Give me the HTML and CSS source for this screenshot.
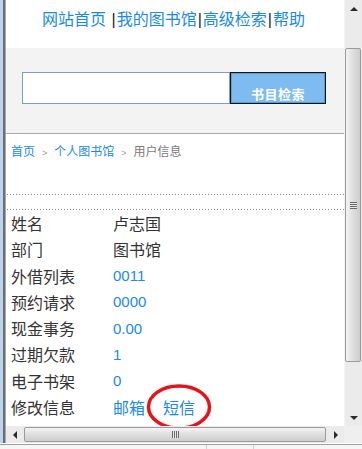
FILE: index.html
```html
<!DOCTYPE html>
<html lang="zh-CN">
<head>
<meta charset="utf-8">
<title>用户信息</title>
<link rel="stylesheet" href="styles.css">
</head>
<body>
<div class="window">
  <div class="main">
    <div class="edge"></div>
    <div class="viewport">
      <div class="topnav">
        <a href="#">网站首页</a> <span class="sep">|</span><a href="#">我的图书馆</a><span class="sep">|</span><a href="#">高级检索</a><span class="sep">|</span><a href="#">帮助</a>
      </div>
      <div class="searchbar">
        <input class="search-input" type="text">
        <button class="search-btn" type="button">书目检索</button>
      </div>
      <div class="crumbs">
        <a href="#">首页</a><span class="gt">&gt;</span><a href="#">个人图书馆</a><span class="gt">&gt;</span><span class="current">用户信息</span>
      </div>
      <div class="dots"></div>
      <div class="info">
        <div class="row"><span class="label">姓名</span><span class="val">卢志国</span></div>
        <div class="row"><span class="label">部门</span><span class="val">图书馆</span></div>
        <div class="row"><span class="label">外借列表</span><a class="num" href="#">0011</a></div>
        <div class="row"><span class="label">预约请求</span><a class="num" href="#">0000</a></div>
        <div class="row"><span class="label">现金事务</span><a class="num" href="#">0.00</a></div>
        <div class="row"><span class="label">过期欠款</span><a class="num" href="#">1</a></div>
        <div class="row"><span class="label">电子书架</span><a class="num" href="#">0</a></div>
        <div class="row"><span class="label">修改信息</span><a class="link" href="#">邮箱</a><a class="link sms" href="#">短信<svg class="ring" width="66" height="46" viewBox="0 0 66 46"><ellipse cx="33" cy="23" rx="30.5" ry="21" fill="none" stroke="#e5141b" stroke-width="3.5"/></svg></a></div>
        <div class="row"><a class="label link" href="#">退出</a></div>
      </div>
    </div>
    <div class="vscroll">
      <div class="arrow-box"><span class="tri up"></span></div>
      <div class="vtrack">
        <div class="vthumb"><span class="grip-v"></span></div>
      </div>
      <div class="arrow-box"><span class="tri down"></span></div>
    </div>
  </div>
  <div class="hrow">
    <div class="edge"></div>
    <div class="hscroll">
      <div class="harrow"><span class="tri left"></span></div>
      <div class="htrack">
        <div class="hthumb"><span class="grip-h"></span></div>
      </div>
      <div class="harrow"><span class="tri right"></span></div>
    </div>
    <div class="corner"></div>
  </div>
  <div class="status">
    <div class="seg seg-a"></div>
    <div class="seg seg-b"></div>
    <div class="seg seg-c"></div>
  </div>
</div>
</body>
</html>
```
FILE: styles.css
```css
* { box-sizing: border-box; }
html, body {
  margin: 0;
  padding: 0;
  width: 362px;
  height: 449px;
  overflow: hidden;
  background: #ffffff;
  font-family: "Liberation Sans", "Noto Sans CJK SC", sans-serif;
}
a { text-decoration: none; color: #1a8ae8; }

.window {
  display: flex;
  flex-direction: column;
  width: 362px;
  height: 449px;
}
.main {
  display: flex;
  height: 426px;
}
.edge {
  width: 6px;
  flex: none;
  background: linear-gradient(to right, #bcd4ee 0, #bcd4ee 3px, #6e6e6e 3px, #6e6e6e 5px, #a8a8a8 5px, #a8a8a8 6px);
}
.viewport {
  width: 338px;
  flex: none;
  overflow: hidden;
  background: #ffffff;
}

/* top navigation */
.topnav {
  height: 48px;
  padding-top: 8px;
  padding-left: 36px;
  line-height: 24px;
  font-size: 16px;
  white-space: nowrap;
}
.topnav a { color: #1a8ae8; }
.topnav .sep {
  color: #1c1c1c;
  margin: 0 1px;
}

/* search band */
.searchbar {
  height: 86px;
  background: #f3f3f3;
  border-bottom: 1px solid #a9a9a9;
  padding: 24px 0 0 16px;
  display: flex;
  align-items: flex-start;
}
.search-input {
  width: 208px;
  height: 32px;
  margin: 0;
  border: 1px solid #7f9dcc;
  background: #ffffff;
  padding: 0 4px;
  outline: none;
}
.search-btn {
  width: 96px;
  height: 32px;
  margin: 0;
  border: 1px solid #111111;
  box-shadow: inset 0 0 0 1px #5c9ad6;
  background: #7ebbf0;
  color: #ffffff;
  font-family: "Liberation Sans", "Noto Sans CJK SC", sans-serif;
  font-weight: bold;
  font-size: 13px;
  line-height: 13px;
  padding: 13px 0 0 0;
  letter-spacing: 0.5px;
}

/* breadcrumbs */
.crumbs {
  height: 60px;
  padding: 11px 0 0 5px;
  font-size: 12px;
  line-height: 14px;
  white-space: nowrap;
}
.crumbs .gt {
  color: #9a9a9a;
  font-size: 9px;
  margin: 0 7px;
}
.crumbs .current { color: #7a7a7a; }

.dots {
  height: 16px;
  margin-left: 1px;
  background:
    repeating-linear-gradient(to right, #8a8a8a 0, #8a8a8a 1px, transparent 1px, transparent 3px) top left / 100% 1px no-repeat,
    repeating-linear-gradient(to right, #8a8a8a 0, #8a8a8a 1px, transparent 1px, transparent 3px) bottom left / 100% 1px no-repeat;
}

/* info rows */
.info {
  padding-left: 5px;
}
.row {
  display: flex;
  align-items: center;
  height: 26.25px;
  font-size: 16px;
  color: #333333;
  white-space: nowrap;
}
.label {
  width: 102px;
  flex: none;
  color: #333333;
}
a.label { color: #1a8ae8; }
.val { color: #333333; }
.num {
  color: #1a8ae8;
  font-family: "Liberation Sans", sans-serif;
  font-size: 15px;
}
.link { color: #1a8ae8; }
.sms {
  position: relative;
  margin-left: 18px;
}
.ring {
  position: absolute;
  left: 50%;
  top: 50%;
  margin-left: -33px;
  margin-top: -23px;
  pointer-events: none;
}

/* vertical scrollbar */
.vscroll {
  width: 18px;
  flex: none;
  display: flex;
  flex-direction: column;
  background: #ebebeb;
  border-left: 1px solid #f4f4f4;
}
.arrow-box {
  height: 17px;
  display: flex;
  align-items: center;
  justify-content: center;
}
.tri {
  width: 0;
  height: 0;
  display: block;
}
.tri.up { border-left: 4px solid transparent; border-right: 4px solid transparent; border-bottom: 4px solid #2a2a2a; }
.tri.down { border-left: 4px solid transparent; border-right: 4px solid transparent; border-top: 4px solid #2a2a2a; }
.tri.left { border-top: 4px solid transparent; border-bottom: 4px solid transparent; border-right: 4px solid #2a2a2a; }
.tri.right { border-top: 4px solid transparent; border-bottom: 4px solid transparent; border-left: 4px solid #2a2a2a; }
.vtrack {
  flex: 1;
  padding: 31px 1px 47px 0;
  display: flex;
}
.vthumb {
  flex: 1;
  border: 1px solid #9a9a9a;
  border-radius: 2px;
  background: linear-gradient(to right, #f4f4f4 0, #e2e2e2 40%, #cdcdcd 100%);
  display: flex;
  align-items: center;
  justify-content: center;
}
.grip-v {
  width: 7px;
  height: 7px;
  background: repeating-linear-gradient(to bottom, #6a6a6a 0, #6a6a6a 1px, #e8e8e8 1px, #e8e8e8 2px);
}

/* horizontal scrollbar row */
.hrow {
  display: flex;
  height: 17px;
}
.hscroll {
  width: 338px;
  flex: none;
  display: flex;
  background: #ebebeb;
}
.harrow {
  width: 17px;
  display: flex;
  align-items: center;
  justify-content: center;
}
.htrack {
  flex: 1;
  padding: 1px 1px 1px 1px;
  display: flex;
}
.hthumb {
  flex: 1;
  border: 1px solid #9a9a9a;
  border-radius: 2px;
  background: linear-gradient(to bottom, #f4f4f4 0, #e2e2e2 40%, #cdcdcd 100%);
  display: flex;
  align-items: center;
  justify-content: center;
}
.grip-h {
  width: 7px;
  height: 7px;
  background: repeating-linear-gradient(to right, #6a6a6a 0, #6a6a6a 1px, #e8e8e8 1px, #e8e8e8 2px);
}
.corner {
  width: 18px;
  flex: none;
  background: #efefef;
}

/* status strip */
.status {
  flex: 1;
  display: flex;
  border-top: 1px solid #a0a0a0;
  margin-top: 1px;
  background: #f6f6f6;
}
.seg { height: 100%; }
.seg-a { width: 207px; border-right: 1px solid #d0d0d0; }
.seg-b { width: 47px; border-right: 1px solid #d0d0d0; }
.seg-c { flex: 1; }
```
